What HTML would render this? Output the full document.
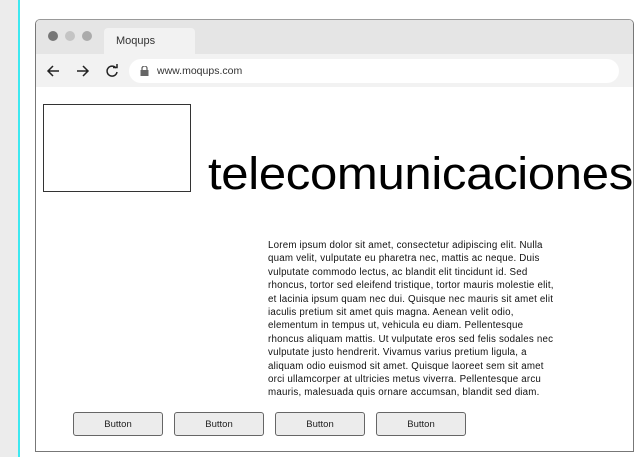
<!DOCTYPE html>
<html><head><style>
body{margin:0;width:640px;height:457px;background:#fff;position:relative;overflow:hidden;font-family:"Liberation Sans",Arial,sans-serif}
.side{position:absolute;left:0;top:0;width:18px;height:457px;background:#ececec;border-right:2px solid #3ee8f0}
.frame{position:absolute;left:35px;top:19px;width:597px;height:431px;border:1px solid #777;border-top-color:#999;border-radius:5px 5px 0 0;background:#fff;overflow:hidden}
.title{position:absolute;left:0;top:0;width:100%;height:34px;background:#e5e5e5}
.dot{position:absolute;top:11px;width:10px;height:10px;border-radius:50%}
.tab{position:absolute;left:68px;top:8px;width:91px;height:26px;background:#f2f2f2;border-radius:4px 4px 0 0;font-size:11px;color:#333;line-height:26px;padding-left:12px;box-sizing:border-box}
.addr{position:absolute;left:0;top:34px;width:100%;height:33px;background:#f2f2f2}
.url{position:absolute;left:93px;top:5px;width:490px;height:24px;background:#fff;border-radius:12px;font-size:10.5px;color:#333;line-height:24px;padding-left:28px;box-sizing:border-box}
.box{position:absolute;left:43px;top:104px;width:146px;height:86px;border:1px solid #333}
.big{position:absolute;left:208px;top:148px;font-size:45px;color:#000;white-space:nowrap;letter-spacing:-0.3px;transform:scaleX(1.09);transform-origin:0 0}
.para{position:absolute;left:268px;top:239px;width:290px;font-size:9.75px;letter-spacing:0.2px;line-height:13.4px;color:#111}
.btn{position:absolute;top:412px;width:88px;height:22px;border:1px solid #666;border-radius:3px;background:#ececec;font-size:9.5px;text-align:center;line-height:24px;color:#222}
</style></head><body>
<div class="side"></div>
<div class="frame">
<div class="title">
<div class="dot" style="left:12px;background:#777"></div>
<div class="dot" style="left:29px;background:#c4c4c4"></div>
<div class="dot" style="left:46px;background:#ababab"></div>
<div class="tab">Moqups</div>
</div>
<div class="addr">
<svg style="position:absolute;left:10px;top:10px" width="90" height="14" viewBox="0 0 90 14" fill="none" stroke="#222" stroke-width="1.5">
<path d="M13 7H2M7 2L2 7L7 12"/>
<path d="M31 7H42M37 2L42 7L37 12"/>
<path d="M70 4A5 5 0 1 0 71 8"/><path d="M67 3.5H71V0" />
</svg>
<div class="url"><svg style="position:absolute;left:11px;top:7px" width="9" height="10" viewBox="0 0 9 10"><rect x="0.5" y="4" width="8" height="6" fill="#666"/><path d="M2 4V2.5A2.5 2.5 0 0 1 7 2.5V4" stroke="#666" fill="none" stroke-width="1.3"/></svg>www.moqups.com</div>
</div>
</div>
<div class="box"></div>
<div class="big">telecomunicaciones</div>
<div class="para">Lorem ipsum dolor sit amet, consectetur adipiscing elit. Nulla quam velit, vulputate eu pharetra nec, mattis ac neque. Duis vulputate commodo lectus, ac blandit elit tincidunt id. Sed rhoncus, tortor sed eleifend tristique, tortor mauris molestie elit, et lacinia ipsum quam nec dui. Quisque nec mauris sit amet elit iaculis pretium sit amet quis magna. Aenean velit odio, elementum in tempus ut, vehicula eu diam. Pellentesque rhoncus aliquam mattis. Ut vulputate eros sed felis sodales nec vulputate justo hendrerit. Vivamus varius pretium ligula, a aliquam odio euismod sit amet. Quisque laoreet sem sit amet orci ullamcorper at ultricies metus viverra. Pellentesque arcu mauris, malesuada quis ornare accumsan, blandit sed diam.</div>
<div class="btn" style="left:73px">Button</div>
<div class="btn" style="left:174px">Button</div>
<div class="btn" style="left:275px">Button</div>
<div class="btn" style="left:376px">Button</div>
</body></html>
